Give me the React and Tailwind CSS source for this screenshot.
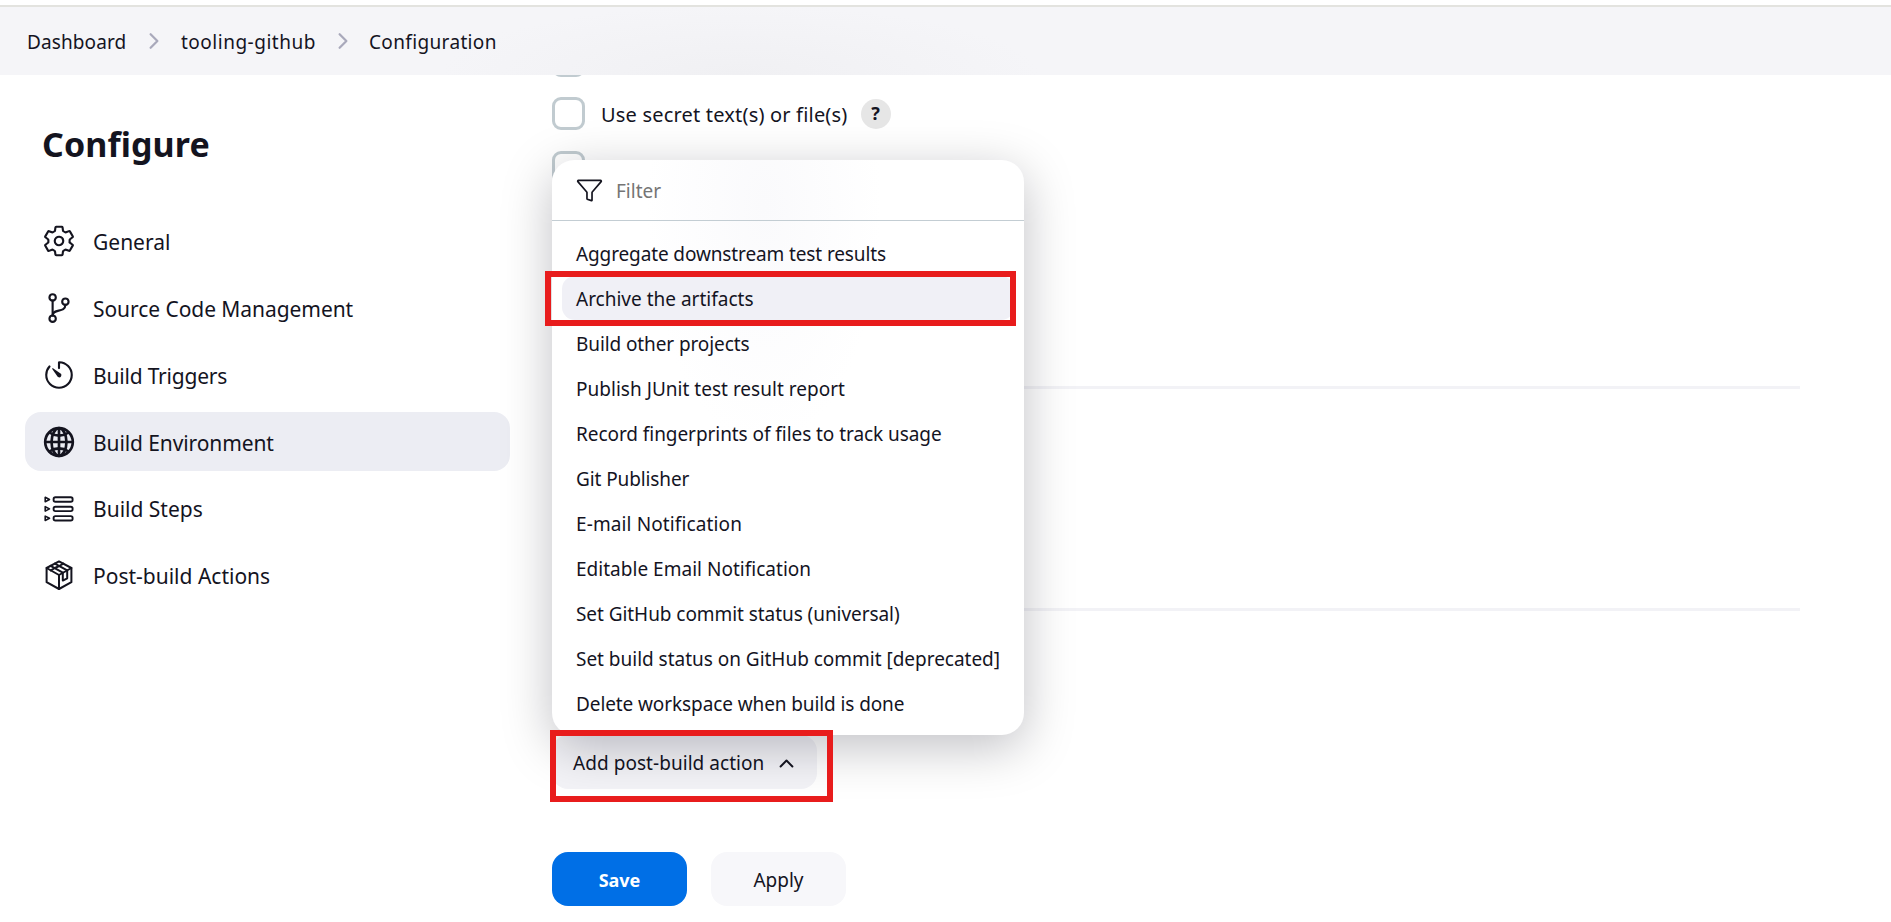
import {
  IoChevronForward,
  IoChevronUp,
  IoFunnelOutline,
  IoGitBranchOutline,
  IoGlobeOutline,
  IoSettingsOutline,
  IoTimerOutline,
} from "react-icons/io5";

function StepsIcon() {
  return (
    <svg width="34" height="34" viewBox="0 0 34 34" fill="none" stroke="currentColor" strokeWidth="1.9" strokeLinejoin="round">
      <rect x="11.6" y="5.3" width="19" height="4.4" rx="1.8" />
      <rect x="11.6" y="14.7" width="19" height="4.4" rx="1.8" />
      <rect x="11.6" y="24.1" width="19" height="4.4" rx="1.8" />
      <path strokeWidth="1.6" d="M3.2 5.3v4.4l4.3-2.2zM3.2 14.7v4.4l4.3-2.2zM3.2 24.1v4.4l4.3-2.2z" />
    </svg>
  );
}

function PackageIcon() {
  return (
    <svg width="34" height="34" viewBox="0 0 34 34" fill="none" stroke="currentColor" strokeWidth="2" strokeLinejoin="round" strokeLinecap="round">
      <path d="M17 3.4 29.4 10v14.2L17 31 4.600 24.200V10z" />
      <path d="M4.600 10 17 17 29.400 10M17 17v14" />
      <path d="M8.600 7.800 20.800 14.700v7.900l4.400-2.300v-8L12.900 5.600" />
      <path d="M8.800 12.400 12.900 10M17.200 8 21.400 5.600M12.900 10 17.200 8" />
    </svg>
  );
}

const sections = [
  { label: "General", Icon: IoSettingsOutline, track: "" },
  { label: "Source Code Management", Icon: IoGitBranchOutline, track: "tracking-[-0.06px]" },
  { label: "Build Triggers", Icon: IoTimerOutline, track: "tracking-[-0.2px]" },
  { label: "Build Environment", Icon: IoGlobeOutline, track: "tracking-[-0.1px]", active: true },
  { label: "Build Steps", Icon: StepsIcon, track: "" },
  { label: "Post-build Actions", Icon: PackageIcon, track: "" },
];

const actions = [
  { name: "Aggregate downstream test results", track: "tracking-[-0.12px]" },
  { name: "Archive the artifacts", track: "tracking-normal" },
  { name: "Build other projects", track: "tracking-[-0.1px]" },
  { name: "Publish JUnit test result report", track: "tracking-[0.02px]" },
  { name: "Record fingerprints of files to track usage", track: "tracking-[-0.06px]" },
  { name: "Git Publisher", track: "tracking-[-0.1px]" },
  { name: "E-mail Notification", track: "tracking-[0.12px]" },
  { name: "Editable Email Notification", track: "tracking-[0.02px]" },
  { name: "Set GitHub commit status (universal)", track: "tracking-[-0.06px]" },
  { name: "Set build status on GitHub commit [deprecated]", track: "tracking-[-0.02px]" },
  { name: "Delete workspace when build is done", track: "tracking-[-0.1px]" },
];

function Checkbox() {
  return <span className="block size-[33px] shrink-0 rounded-[9px] border-3 border-[#c1cbd0] bg-white" />;
}

function ActionMenu() {
  return (
    <div className="absolute bottom-full left-0 h-[575px] w-[472px] rounded-[22px] bg-white bg-[radial-gradient(ellipse_at_45%_8%,#fafafc_0%,#ffffff_32%)] shadow-[0_12px_50px_rgba(0,0,20,0.25)]">
      <div className="flex h-[61px] items-center border-b border-[#c3cdd3] pl-6">
        <IoFunnelOutline className="mt-px size-[27px]" />
        <span className="ml-[13px] pt-[3px] text-[19px] text-[#757575]">Filter</span>
      </div>
      <ul className="flex flex-col gap-px px-2.5 pt-2.5">
        {actions.map(({ name, track }) => (
          <li
            key={name}
            className={
              "relative flex h-11 items-center rounded-[13px] px-3.5 pt-0.5 text-[19px] whitespace-nowrap " +
              track +
              (name === "Archive the artifacts" ? " bg-[#f0f0f6]" : "")
            }
          >
            {name}
            {name === "Archive the artifacts" && (
              <span className="absolute -top-[5px] -left-[17px] h-[55px] w-[471px] border-6 border-[#e81c1c]" />
            )}
          </li>
        ))}
      </ul>
    </div>
  );
}

export default function App() {
  return (
    <div className="flex h-[922px] w-[1891px] flex-col overflow-hidden bg-white font-['Noto_Sans',sans-serif] text-[#14141f]">
      <header className="mt-[5px] flex h-[70px] shrink-0 items-center border-t-2 border-[#e3e3df] bg-[#f5f5f8] bg-[radial-gradient(ellipse_300px_70px_at_740px_100%,#f0f0f3_0%,#f5f5f8_100%)] pt-0.5 pl-[27px] text-[19px]">
        <span className="w-[115px] tracking-[0.1px]">Dashboard</span>
        <IoChevronForward className="mr-[15px] -mt-[3px] size-6 text-[#a9a9bb]" />
        <span className="w-[150px] tracking-[0.5px]">tooling-github</span>
        <IoChevronForward className="mr-[14px] -mt-[3px] size-6 text-[#a9a9bb]" />
        <span className="tracking-[0.35px]">Configuration</span>
      </header>

      <div className="flex min-h-0 grow">
        <aside className="w-[552px] shrink-0 pl-[25px]">
          <h1 className="mt-[44px] ml-[17px] text-[34px] leading-[50px] font-bold tracking-[0.1px]">Configure</h1>
          <nav className="mt-[43px] flex w-[485px] flex-col gap-2">
            {sections.map(({ label, Icon, track, active }) => (
              <a
                key={label}
                className={
                  "flex h-[58.8px] items-center gap-[17.500px] rounded-2xl pl-[16.5px] text-[21px] " + (active ? "bg-[#ecedf3]" : "")
                }
              >
                <Icon
                  className={"size-[34px] shrink-0 " + (active ? "[&_path]:[stroke-width:40px]" : "")}
                />
                <span className={"pt-[3px] " + track}>{label}</span>
              </a>
            ))}
          </nav>
        </aside>

        <main className="flex w-[1248px] flex-col overflow-visible">
          <div className="h-[2px] overflow-hidden">
            <div className="-mt-[31px]">
              <Checkbox />
            </div>
          </div>
          <div className="mt-5 flex h-[33px] items-center">
            <Checkbox />
            <span className="ml-4 pt-0.5 text-[20px] tracking-[0.19px]">Use secret text(s) or file(s)</span>
            <span className="ml-[13px] flex size-[30px] items-center justify-center rounded-full bg-[#e6e6e6] text-[18px] font-bold">?</span>
          </div>
          <div className="mt-[21px]">
            <Checkbox />
          </div>
          <hr className="mt-[202px] h-[3px] border-0 bg-[#f2f2f6]" />
          <hr className="mt-[219px] h-[3px] border-0 bg-[#f2f2f6]" />

          <div className="relative mt-[124px] h-[54px] w-[265px]">
            <button className="flex size-full items-center rounded-2xl bg-[#f3f3f7] pt-0.5 pl-[21px] text-[19px] tracking-[0.05px]">
              Add post-build action
              <IoChevronUp className="ml-[12px] size-[21px]" />
            </button>
            <ActionMenu />
            <span className="absolute -top-[5px] -left-[2px] h-[72px] w-[283px] border-6 border-[#e81c1c]" />
          </div>

          <div className="mt-[63px] flex gap-6">
            <button className="h-[54px] w-[135px] rounded-2xl bg-[#006fe6] pt-0.5 text-[18px] font-bold text-white">Save</button>
            <button className="h-[54px] w-[135px] rounded-2xl bg-[#f7f7fa] pt-0.5 text-[19px]">Apply</button>
          </div>
        </main>
      </div>
    </div>
  );
}
